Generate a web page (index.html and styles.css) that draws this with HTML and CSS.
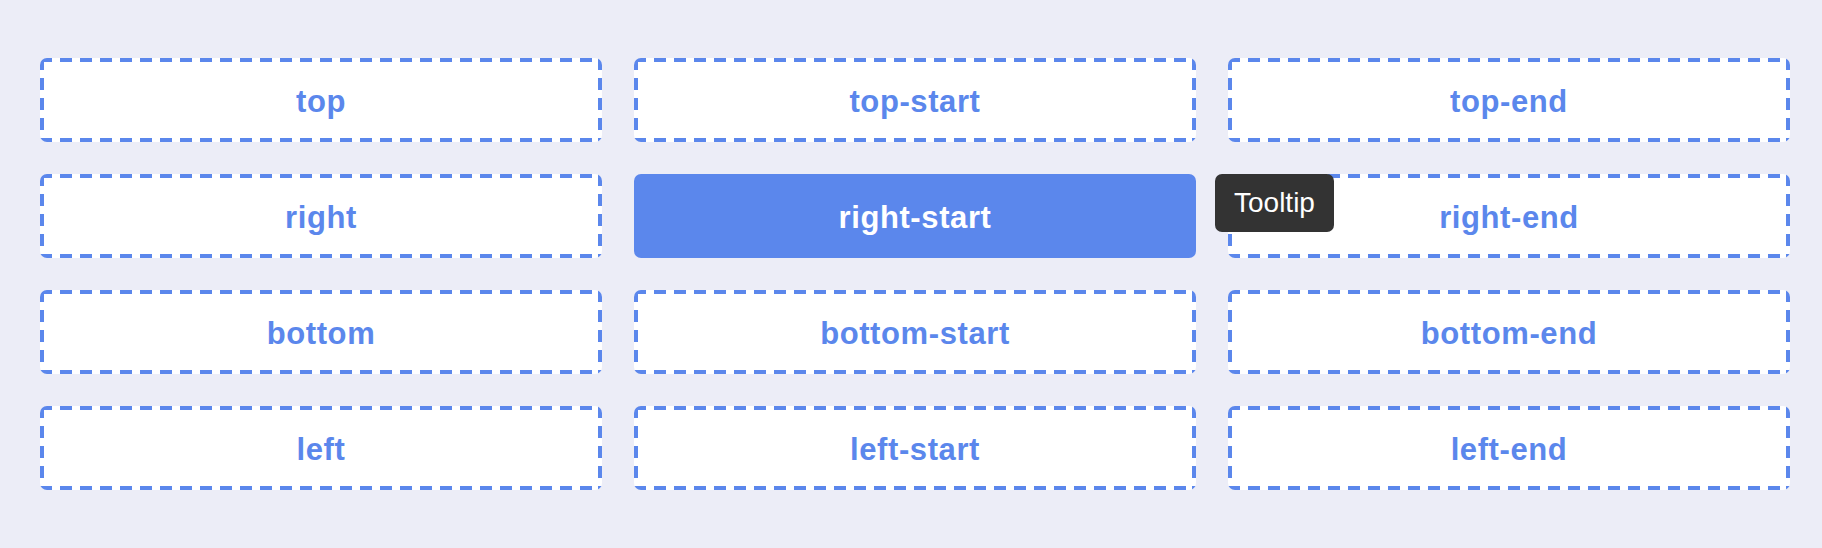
FILE: index.html
```html
<!DOCTYPE html>
<html lang="en">
<head>
<meta charset="utf-8">
<title>Tooltip placements</title>
<link rel="stylesheet" href="styles.css">
</head>
<body>
<main class="grid">
  <div class="cell">top</div>
  <div class="cell">top-start</div>
  <div class="cell">top-end</div>
  <div class="cell">right</div>
  <div class="cell cell-active">right-start<span class="tooltip">Tooltip</span></div>
  <div class="cell">right-end</div>
  <div class="cell">bottom</div>
  <div class="cell">bottom-start</div>
  <div class="cell">bottom-end</div>
  <div class="cell">left</div>
  <div class="cell">left-start</div>
  <div class="cell">left-end</div>
</main>
</body>
</html>
```
FILE: styles.css
```css
html, body {
  margin: 0;
  padding: 0;
  background: #ecedf7;
}

.grid {
  display: grid;
  grid-template-columns: repeat(3, 1fr);
  grid-auto-rows: 84px;
  column-gap: 32px;
  row-gap: 32px;
  padding: 58px 32px 58px 40px;
}

.cell {
  position: relative;
  box-sizing: border-box;
  display: flex;
  align-items: center;
  justify-content: center;
  padding-top: 4px;
  border-radius: 7px;
  background-color: #ffffff;
  background-image:
    repeating-linear-gradient(90deg, #5b87ec 0 12px, transparent 12px 20px),
    repeating-linear-gradient(90deg, #5b87ec 0 12px, transparent 12px 20px),
    repeating-linear-gradient(180deg, #5b87ec 0 12px, transparent 12px 20px),
    repeating-linear-gradient(180deg, #5b87ec 0 12px, transparent 12px 20px);
  background-size: 100% 4px, 100% 4px, 4px 100%, 4px 100%;
  background-position: 0 0, 0 100%, 0 0, 100% 0;
  background-repeat: no-repeat;
  color: #5b87ec;
  font-family: "Liberation Sans", Arial, sans-serif;
  font-weight: 700;
  font-size: 31px;
  letter-spacing: 0.6px;
}

.cell-active {
  background-image: none;
  background-color: #5b87ec;
  color: #ffffff;
}

.tooltip {
  position: absolute;
  left: calc(100% + 19px);
  top: 0;
  height: 58px;
  line-height: 58px;
  padding: 0 19px;
  background: #333333;
  border-radius: 7px;
  color: #ffffff;
  font-family: "Liberation Sans", Arial, sans-serif;
  font-weight: 400;
  font-size: 28px;
  letter-spacing: 0;
  white-space: nowrap;
  z-index: 2;
}
```
